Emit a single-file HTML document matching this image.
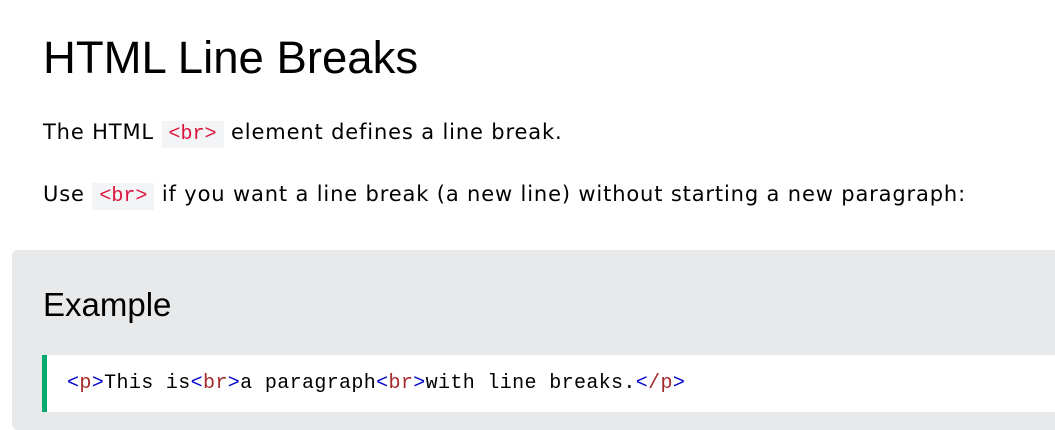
<!DOCTYPE html>
<html><head><style>
body{margin:0;width:1055px;height:416px;overflow:hidden;background:#fff;font-family:"Liberation Sans",sans-serif;color:#000}
h1{position:absolute;left:43px;top:30px;margin:0;font-size:45.5px;font-weight:normal;line-height:56px}
p{position:absolute;left:43px;margin:0;font-family:"DejaVu Sans",sans-serif;font-size:21px;letter-spacing:0.85px;line-height:28px}
code{font-family:"Liberation Mono",monospace;font-size:20px;letter-spacing:0;color:#dc143c;background:#f3f4f6;padding:2px 7px}
.ex{position:absolute;left:12px;top:250px;width:1060px;height:180px;background:#e7e9eb;border-radius:6px}
h2{position:absolute;left:43px;top:283px;margin:0;font-size:33px;font-weight:normal;line-height:44px}
.code{position:absolute;left:42px;top:355px;width:1020px;height:57px;background:#fff;border-left:5px solid #04AA6D}
.code span.t{position:absolute;left:20px;top:16px;font-family:"Liberation Mono",monospace;font-size:20px;letter-spacing:0.36px;white-space:pre;line-height:26px}
.b{color:#0000cd}.r{color:#a52a2a}
</style></head><body>
<h1>HTML Line Breaks</h1>
<p style="top:118px">The HTML <code>&lt;br&gt;</code> element defines a line break.</p>
<p style="top:180px">Use <code>&lt;br&gt;</code> if you want a line break (a new line) without starting a new paragraph:</p>
<div class="ex"></div>
<h2>Example</h2>
<div class="code"><span class="t"><span class="b">&lt;</span><span class="r">p</span><span class="b">&gt;</span>This is<span class="b">&lt;</span><span class="r">br</span><span class="b">&gt;</span>a paragraph<span class="b">&lt;</span><span class="r">br</span><span class="b">&gt;</span>with line breaks.<span class="b">&lt;</span><span class="r">/p</span><span class="b">&gt;</span></span></div>
</body></html>
